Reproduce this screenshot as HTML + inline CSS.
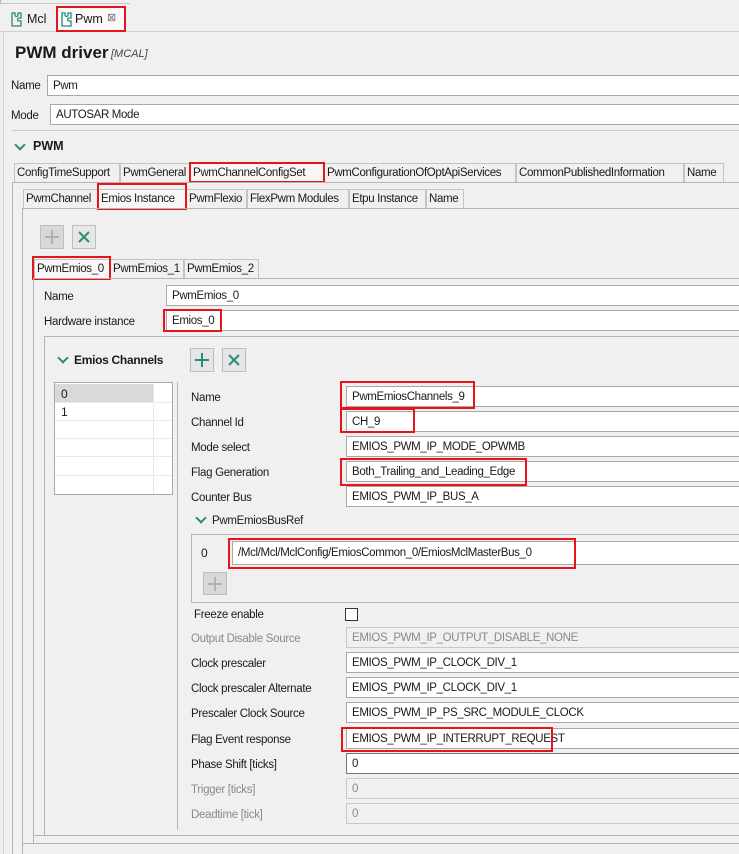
<!DOCTYPE html>
<html><head><meta charset="utf-8">
<style>
*{box-sizing:border-box;margin:0;padding:0}
body{width:739px;height:854px;background:#f0f0f0;font-family:"Liberation Sans",sans-serif;font-size:12px;color:#1a1a1a;position:relative;overflow:hidden}
.a{position:absolute;white-space:nowrap}
.in{position:absolute;background:#fff;border:1px solid #a8a8a8;border-right:none;height:21px;padding:4px 0 0 5px;letter-spacing:-0.35px;font-size:11.5px}
.dis{background:#f0f0f0;color:#8a8a8a;border-color:#c8c8c8}
.lb{position:absolute;white-space:nowrap;letter-spacing:-0.3px;font-size:11.5px;margin-top:1px}
.gr{color:#8a8a8a}
.red{position:absolute;border:2px solid #e8141c}
.tab{position:absolute;height:19px;border:1px solid #c4c4c4;border-bottom:none;background:#f0f0f0;padding:3px 0 0 2px;white-space:nowrap;letter-spacing:-0.35px;font-size:11.5px;overflow:hidden}
.vl{position:absolute;width:1px;background:#b4b4b4}
.hl{position:absolute;height:1px;background:#b4b4b4}
.btn{position:absolute;width:24px;height:24px;border:1px solid #bdbdbd;background:#e6e6e6}
.chev{position:absolute;width:8px;height:8px;border-right:2.5px solid #2b8a78;border-bottom:2.5px solid #2b8a78;transform:rotate(45deg)}
</style></head><body>
<div class="hl" style="left:0;top:31px;width:739px;background:#d0d0d0"></div>
<div class="vl" style="left:0;top:0;height:4px"></div>
<div class="hl" style="left:0;top:3px;width:130px;background:#c8c8c8"></div>
<svg class="a" style="left:9px;top:11px" width="14" height="16" viewBox="0 0 14 16"><path d="M3 2h3v2a1.5 1.5 0 003 0V2h3v5h-2a1.5 1.5 0 000 3h2v5H3z" fill="none" stroke="#2b8a78" stroke-width="1.3"/></svg>
<div class="a" style="left:27px;top:12px;font-size:12.5px">Mcl</div>
<div class="a" style="left:56px;top:6px;width:69px;height:26px;background:#fafafa"></div>
<svg class="a" style="left:59px;top:11px" width="14" height="16" viewBox="0 0 14 16"><path d="M3 2h3v2a1.5 1.5 0 003 0V2h3v5h-2a1.5 1.5 0 000 3h2v5H3z" fill="none" stroke="#2b8a78" stroke-width="1.3"/></svg>
<div class="a" style="left:75px;top:12px;font-size:12.5px">Pwm</div>
<div class="a" style="left:107px;top:11px;font-size:11px;color:#777">⊠</div>
<div class="red" style="left:56px;top:6px;width:70px;height:26px"></div>
<div class="vl" style="left:3px;top:31px;height:823px;background:#d4d4d4"></div>

<div class="a" style="left:15px;top:43px;font-size:17px;font-weight:bold">PWM driver</div>
<div class="a" style="left:111px;top:48px;font-size:11px;font-style:italic;color:#444">[MCAL]</div>

<div class="lb" style="left:11px;top:79px">Name</div>
<div class="in" style="left:47px;top:75px;width:692px">Pwm</div>
<div class="lb" style="left:11px;top:109px">Mode</div>
<div class="in" style="left:50px;top:104px;width:689px">AUTOSAR Mode</div>
<div class="hl" style="left:12px;top:130px;width:727px;background:#c8c8c8"></div>

<div class="chev" style="left:16px;top:141px"></div>
<div class="a" style="left:33px;top:139px;font-weight:bold;font-size:12.5px">PWM</div>

<div class="tab" style="left:14px;top:163px;width:106px">ConfigTimeSupport</div>
<div class="tab" style="left:120px;top:163px;width:70px">PwmGeneral</div>
<div class="tab" style="left:190px;top:163px;width:134px;background:#f7f7f7">PwmChannelConfigSet</div>
<div class="tab" style="left:324px;top:163px;width:192px">PwmConfigurationOfOptApiServices</div>
<div class="tab" style="left:516px;top:163px;width:168px">CommonPublishedInformation</div>
<div class="tab" style="left:684px;top:163px;width:40px">Name</div>
<div class="red" style="left:189px;top:162px;width:136px;height:21px"></div>
<div class="hl" style="left:12px;top:182px;width:727px"></div>
<div class="vl" style="left:12px;top:182px;height:672px"></div>

<div class="tab" style="left:23px;top:189px;width:75px">PwmChannel</div>
<div class="tab" style="left:98px;top:189px;width:88px;background:#f7f7f7">Emios Instance</div>
<div class="tab" style="left:186px;top:189px;width:61px">PwmFlexio</div>
<div class="tab" style="left:247px;top:189px;width:102px">FlexPwm Modules</div>
<div class="tab" style="left:349px;top:189px;width:77px">Etpu Instance</div>
<div class="tab" style="left:426px;top:189px;width:38px">Name</div>
<div class="red" style="left:97px;top:183px;width:90px;height:27px"></div>
<div class="hl" style="left:22px;top:208px;width:717px"></div>
<div class="vl" style="left:22px;top:208px;height:646px"></div>
<div class="hl" style="left:22px;top:843px;width:717px"></div>

<div class="btn" style="left:40px;top:225px;background:#d8d8d8"><svg width="22" height="22"><path d="M11 4v14M4 11h14" stroke="#b0b0b0" stroke-width="2"/></svg></div>
<div class="btn" style="left:72px;top:225px"><svg width="22" height="22"><path d="M6 6l10 10M16 6L6 16" stroke="#2b8a78" stroke-width="2"/></svg></div>

<div class="tab" style="left:34px;top:259px;width:76px;background:#f7f7f7">PwmEmios_0</div>
<div class="tab" style="left:110px;top:259px;width:74px">PwmEmios_1</div>
<div class="tab" style="left:184px;top:259px;width:75px">PwmEmios_2</div>
<div class="red" style="left:32px;top:256px;width:79px;height:24px"></div>
<div class="hl" style="left:33px;top:278px;width:706px"></div>
<div class="vl" style="left:33px;top:278px;height:566px"></div>
<div class="hl" style="left:33px;top:835px;width:706px"></div>

<div class="lb" style="left:44px;top:290px">Name</div>
<div class="in" style="left:166px;top:285px;width:573px">PwmEmios_0</div>
<div class="lb" style="left:44px;top:315px">Hardware instance</div>
<div class="in" style="left:166px;top:310px;width:573px">Emios_0</div>
<div class="red" style="left:163px;top:309px;width:59px;height:23px"></div>

<div class="hl" style="left:44px;top:336px;width:695px"></div>
<div class="vl" style="left:44px;top:336px;height:500px"></div>
<div class="hl" style="left:44px;top:835px;width:695px"></div>
<div class="chev" style="left:59px;top:354px"></div>
<div class="a" style="left:74px;top:353px;font-weight:bold;letter-spacing:-0.3px">Emios Channels</div>
<div class="btn" style="left:190px;top:348px"><svg width="22" height="22"><path d="M11 4v14M4 11h14" stroke="#2b8a78" stroke-width="2"/></svg></div>
<div class="btn" style="left:222px;top:348px"><svg width="22" height="22"><path d="M6 6l10 10M16 6L6 16" stroke="#2b8a78" stroke-width="2"/></svg></div>

<div class="a" style="left:54px;top:382px;width:119px;height:113px;background:#fff;border:1px solid #a8a8a8"></div>
<div class="a" style="left:55px;top:384px;width:98px;height:18px;background:#d9d9d9"></div>
<div class="vl" style="left:153px;top:383px;height:111px;background:#e8e8e8"></div>
<div class="hl" style="left:55px;top:402px;width:117px;background:#eaeaea"></div>
<div class="hl" style="left:55px;top:420px;width:117px;background:#eaeaea"></div>
<div class="hl" style="left:55px;top:438px;width:117px;background:#eaeaea"></div>
<div class="hl" style="left:55px;top:456px;width:117px;background:#eaeaea"></div>
<div class="hl" style="left:55px;top:475px;width:117px;background:#eaeaea"></div>
<div class="a" style="left:61px;top:387px">0</div>
<div class="a" style="left:61px;top:405px">1</div>
<div class="vl" style="left:177px;top:382px;height:448px"></div>

<div class="lb" style="left:191px;top:391px">Name</div>
<div class="in" style="left:346px;top:386px;width:393px">PwmEmiosChannels_9</div>
<div class="red" style="left:340px;top:381px;width:135px;height:28px"></div>
<div class="lb" style="left:191px;top:416px">Channel Id</div>
<div class="in" style="left:346px;top:411px;width:393px">CH_9</div>
<div class="red" style="left:340px;top:408px;width:75px;height:25px"></div>
<div class="lb" style="left:191px;top:441px">Mode select</div>
<div class="in" style="left:346px;top:436px;width:393px">EMIOS_PWM_IP_MODE_OPWMB</div>
<div class="lb" style="left:191px;top:466px">Flag Generation</div>
<div class="in" style="left:346px;top:461px;width:393px">Both_Trailing_and_Leading_Edge</div>
<div class="red" style="left:340px;top:458px;width:187px;height:28px"></div>
<div class="lb" style="left:191px;top:491px">Counter Bus</div>
<div class="in" style="left:346px;top:486px;width:393px">EMIOS_PWM_IP_BUS_A</div>
<div class="chev" style="left:197px;top:514px"></div>
<div class="lb" style="left:212px;top:514px">PwmEmiosBusRef</div>

<div class="a" style="left:191px;top:534px;width:548px;height:69px;border:1px solid #b4b4b4;border-right:none"></div>
<div class="a" style="left:201px;top:546px">0</div>
<div class="in" style="left:232px;top:541px;width:507px;height:24px;padding-top:5px">/Mcl/Mcl/MclConfig/EmiosCommon_0/EmiosMclMasterBus_0</div>
<div class="red" style="left:228px;top:538px;width:348px;height:31px"></div>
<div class="btn" style="left:203px;top:572px;background:#d8d8d8;width:24px;height:23px"><svg width="22" height="22"><path d="M11 4v14M4 11h14" stroke="#b0b0b0" stroke-width="2"/></svg></div>

<div class="lb" style="left:194px;top:608px">Freeze enable</div>
<div class="a" style="left:345px;top:608px;width:13px;height:13px;border:1px solid #333;background:#fff"></div>
<div class="lb gr" style="left:191px;top:632px">Output Disable Source</div>
<div class="in dis" style="left:346px;top:627px;width:393px">EMIOS_PWM_IP_OUTPUT_DISABLE_NONE</div>
<div class="lb" style="left:191px;top:657px">Clock prescaler</div>
<div class="in" style="left:346px;top:652px;width:393px">EMIOS_PWM_IP_CLOCK_DIV_1</div>
<div class="lb" style="left:191px;top:682px">Clock prescaler Alternate</div>
<div class="in" style="left:346px;top:677px;width:393px">EMIOS_PWM_IP_CLOCK_DIV_1</div>
<div class="lb" style="left:191px;top:707px">Prescaler Clock Source</div>
<div class="in" style="left:346px;top:702px;width:393px">EMIOS_PWM_IP_PS_SRC_MODULE_CLOCK</div>
<div class="lb" style="left:191px;top:733px">Flag Event response</div>
<div class="in" style="left:346px;top:728px;width:393px">EMIOS_PWM_IP_INTERRUPT_REQUEST</div>
<div class="red" style="left:341px;top:727px;width:212px;height:25px"></div>
<div class="lb" style="left:191px;top:758px">Phase Shift [ticks]</div>
<div class="in" style="left:346px;top:753px;width:393px;border-color:#777">0</div>
<div class="lb gr" style="left:191px;top:783px">Trigger [ticks]</div>
<div class="in dis" style="left:346px;top:778px;width:393px">0</div>
<div class="lb gr" style="left:191px;top:808px">Deadtime [tick]</div>
<div class="in dis" style="left:346px;top:803px;width:393px">0</div>
</body></html>
